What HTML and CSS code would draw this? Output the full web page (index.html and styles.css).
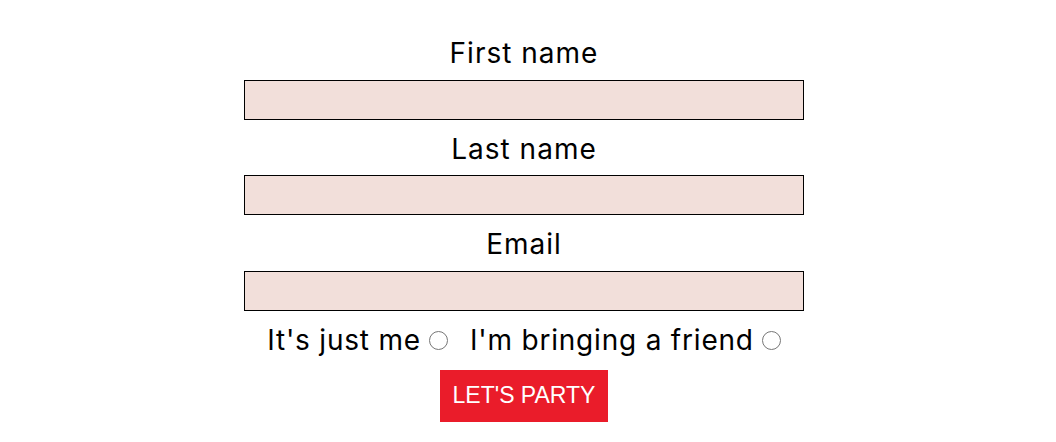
FILE: index.html
```html
<!DOCTYPE html>
<html lang="en">
<head>
<meta charset="utf-8">
<title>RSVP</title>
<link rel="stylesheet" href="styles.css">
</head>
<body>
<form class="rsvp">
  <label class="field-label" for="first">First name</label>
  <input class="field" id="first" type="text">
  <label class="field-label" for="last">Last name</label>
  <input class="field" id="last" type="text">
  <label class="field-label" for="email">Email</label>
  <input class="field" id="email" type="email">
  <div class="choices">
    <label class="choice">It's just me <input class="radio" type="radio" name="guests"></label>
    <label class="choice">I'm bringing a friend <input class="radio" type="radio" name="guests"></label>
  </div>
  <button class="party" type="button">LET'S PARTY</button>
</form>
</body>
</html>
```
FILE: styles.css
```css
html, body {
  margin: 0;
  padding: 0;
  background: #fff;
}
body {
  padding-right: 8px;
}
.rsvp {
  display: flex;
  flex-direction: column;
  align-items: center;
  padding-top: 24px;
  font-family: Inter, "Open Sans", sans-serif;
  color: #000;
  letter-spacing: 1px;
}
.field-label {
  display: block;
  box-sizing: border-box;
  font-size: 28px;
  padding-top: 4px;
  line-height: 51.5px;
  height: 55.5px;
  text-align: center;
}
.field {
  box-sizing: border-box;
  width: 560px;
  height: 40px;
  margin: 0;
  border: 1px solid #000;
  background: #f2dfda;
  padding: 0 8px;
  font-size: 18px;
}
.choices {
  display: flex;
  align-items: center;
  gap: 22px;
  box-sizing: border-box;
  padding-top: 2px;
  height: 57px;
  font-size: 28px;
  letter-spacing: 0.8px;
}
.choice {
  display: flex;
  align-items: center;
  gap: 8px;
}
.radio {
  width: 19px;
  height: 19px;
  margin: 1px 0 0 0;
}
.party {
  margin-top: 2px;
  width: 168px;
  height: 52px;
  border: 0;
  background: #ea1c2a;
  color: #fff;
  font-family: "Liberation Sans", Arial, sans-serif;
  font-size: 23px;
  letter-spacing: 0;
  padding: 0;
}
```
